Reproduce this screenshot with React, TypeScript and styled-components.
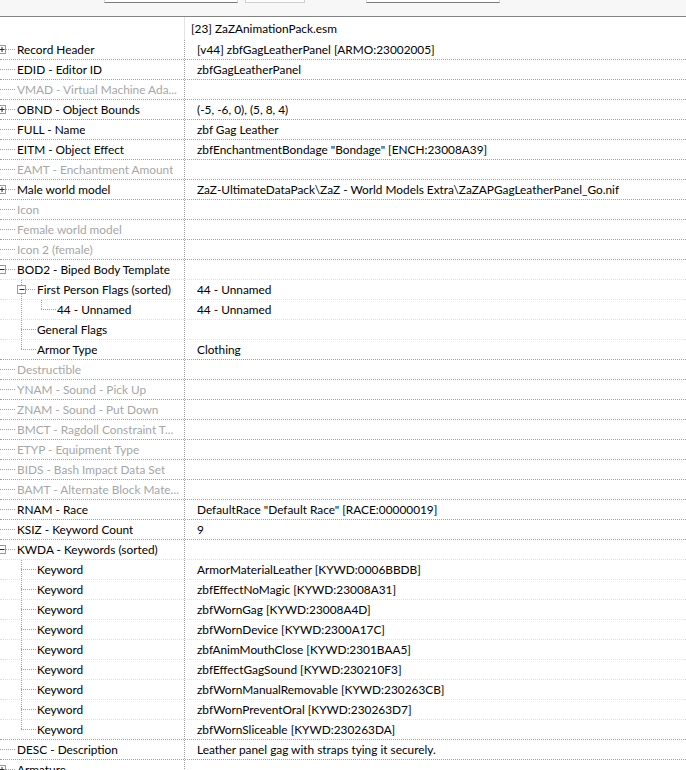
import React from 'react';
import styled, { createGlobalStyle } from 'styled-components';

type Node = {
  label: string;
  value?: string;
  depth?: number;
  expand?: 'open' | 'closed';
  muted?: boolean;
};

const records: Node[] = [
  { label: 'Record Header', value: '[v44] zbfGagLeatherPanel [ARMO:23002005]', expand: 'closed' },
  { label: 'EDID - Editor ID', value: 'zbfGagLeatherPanel' },
  { label: 'VMAD - Virtual Machine Ada...', muted: true },
  { label: 'OBND - Object Bounds', value: '(-5, -6, 0), (5, 8, 4)', expand: 'closed' },
  { label: 'FULL - Name', value: 'zbf Gag Leather' },
  { label: 'EITM - Object Effect', value: 'zbfEnchantmentBondage "Bondage" [ENCH:23008A39]' },
  { label: 'EAMT - Enchantment Amount', muted: true },
  {
    label: 'Male world model',
    value: 'ZaZ-UltimateDataPack\\ZaZ - World Models Extra\\ZaZAPGagLeatherPanel_Go.nif',
    expand: 'closed',
  },
  { label: 'Icon', muted: true },
  { label: 'Female world model', muted: true },
  { label: 'Icon 2 (female)', muted: true },
  { label: 'BOD2 - Biped Body Template', expand: 'open' },
  { label: 'First Person Flags (sorted)', value: '44 - Unnamed', depth: 1, expand: 'open' },
  { label: '44 - Unnamed', value: '44 - Unnamed', depth: 2 },
  { label: 'General Flags', depth: 1 },
  { label: 'Armor Type', value: 'Clothing', depth: 1 },
  { label: 'Destructible', muted: true },
  { label: 'YNAM - Sound - Pick Up', muted: true },
  { label: 'ZNAM - Sound - Put Down', muted: true },
  { label: 'BMCT - Ragdoll Constraint T...', muted: true },
  { label: 'ETYP - Equipment Type', muted: true },
  { label: 'BIDS - Bash Impact Data Set', muted: true },
  { label: 'BAMT - Alternate Block Mate...', muted: true },
  { label: 'RNAM - Race', value: 'DefaultRace "Default Race" [RACE:00000019]' },
  { label: 'KSIZ - Keyword Count', value: '9' },
  { label: 'KWDA - Keywords (sorted)', expand: 'open' },
  { label: 'Keyword', value: 'ArmorMaterialLeather [KYWD:0006BBDB]', depth: 1 },
  { label: 'Keyword', value: 'zbfEffectNoMagic [KYWD:23008A31]', depth: 1 },
  { label: 'Keyword', value: 'zbfWornGag [KYWD:23008A4D]', depth: 1 },
  { label: 'Keyword', value: 'zbfWornDevice [KYWD:2300A17C]', depth: 1 },
  { label: 'Keyword', value: 'zbfAnimMouthClose [KYWD:2301BAA5]', depth: 1 },
  { label: 'Keyword', value: 'zbfEffectGagSound [KYWD:230210F3]', depth: 1 },
  { label: 'Keyword', value: 'zbfWornManualRemovable [KYWD:230263CB]', depth: 1 },
  { label: 'Keyword', value: 'zbfWornPreventOral [KYWD:230263D7]', depth: 1 },
  { label: 'Keyword', value: 'zbfWornSliceable [KYWD:230263DA]', depth: 1 },
  { label: 'DESC - Description', value: 'Leather panel gag with straps tying it securely.' },
  { label: 'Armature', expand: 'closed' },
];

const GlobalStyle = createGlobalStyle`
  html, body {
    margin: 0;
    padding: 0;
    background: #ffffff;
  }
  body {
    width: 686px;
    height: 770px;
    overflow: hidden;
    font-family: Lato, "Noto Sans", "DejaVu Sans", sans-serif;
    font-size: 11.85px;
    color: #000000;
  }
`;

const Window = styled.div`
  width: 686px;
  height: 770px;
  overflow: hidden;
  display: flex;
  flex-direction: column;
  background: #ffffff;
`;

const Toolbar = styled.div`
  flex: none;
  height: 16px;
  background: #f7f7f7;
  border-bottom: 1px solid #838383;
  display: flex;
  align-items: flex-start;
  padding-left: 104px;
  overflow: hidden;
`;

const EditBox = styled.div<{ $width: number; $gap: number }>`
  flex: none;
  width: ${(p) => p.$width}px;
  height: 20px;
  margin-top: -17px;
  margin-right: ${(p) => p.$gap}px;
  box-sizing: border-box;
  background: #ffffff;
  border: 1px solid #dadada;
  border-bottom-color: #7a7a7a;
`;

const ToolButton = styled.div<{ $width: number; $gap: number }>`
  flex: none;
  width: ${(p) => p.$width}px;
  height: 20px;
  margin-top: -17px;
  margin-right: ${(p) => p.$gap}px;
  box-sizing: border-box;
  background: #fdfdfd;
  border: 1px solid #d0d0d0;
`;

const Tree = styled.div`
  flex: 1;
  display: flex;
  flex-direction: column;
  overflow: hidden;
`;

const HeaderRow = styled.div`
  flex: none;
  display: grid;
  grid-template-columns: 185px 1fr;
  height: 23px;
`;

const HeaderName = styled.div`
  border-right: 1px solid #e3e3e3;
`;

const HeaderValue = styled.div`
  padding-left: 6px;
  line-height: 23px;
  white-space: nowrap;
`;

const Row = styled.div<{ $soft: boolean }>`
  flex: none;
  display: grid;
  grid-template-columns: 185px 1fr;
  height: 20px;
  box-sizing: border-box;
  border-bottom: 1px dotted ${(p) => (p.$soft ? '#e0e0e0' : '#a0a0a0')};
`;

const NameCell = styled.div<{ $muted: boolean }>`
  display: flex;
  align-items: flex-start;
  box-sizing: border-box;
  border-right: 1px dotted #a0a0a0;
  overflow: hidden;
  white-space: nowrap;
  color: ${(p) => (p.$muted ? '#a6a6a6' : '#000000')};
`;

const Guide = styled.svg`
  flex: none;
  display: block;
`;

const Label = styled.span`
  line-height: 19px;
  overflow: hidden;
`;

const ValueCell = styled.div`
  padding-left: 12px;
  line-height: 19px;
  white-space: nowrap;
  overflow: hidden;
`;

const LINE = '#a0a0a0';

// does a sibling at `level` follow row i before the branch closes?
const continues = (i: number, level: number) => {
  for (let j = i + 1; j < records.length; j++) {
    const d = records[j].depth ?? 0;
    if (d < level) return false;
    if (d === level) return true;
  }
  return false;
};

function TreeGuide({ index }: { index: number }) {
  const node = records[index];
  const depth = node.depth ?? 0;
  const width = 17 + 20 * depth;
  const cx = 1 + 20 * depth;
  const parts: React.ReactNode[] = [];

  for (let k = 1; k <= depth; k++) {
    const x = 1 + 20 * k + 0.5;
    const more = continues(index, k);
    if (k < depth) {
      if (more) parts.push(<line key={`v${k}`} x1={x} y1={0} x2={x} y2={19} />);
    } else {
      const end = more ? 19 : 10;
      if (node.expand) {
        parts.push(<line key="va" x1={x} y1={0} x2={x} y2={5} />);
        if (more) parts.push(<line key="vb" x1={x} y1={14} x2={x} y2={19} />);
      } else {
        parts.push(<line key="v" x1={x} y1={0} x2={x} y2={end} />);
      }
    }
  }

  const hStart = node.expand ? cx + 5 : depth === 0 ? 0 : cx;
  parts.push(<line key="h" x1={hStart} y1={9.5} x2={16 + 20 * depth} y2={9.5} />);

  return (
    <Guide width={width} height={19} viewBox={`0 0 ${width} 19`}>
      <g stroke={LINE} strokeWidth={1} strokeDasharray="1 1" fill="none">
        {parts}
      </g>
      {node.expand && (
        <g>
          <rect x={cx - 3.5} y={5.5} width={8} height={8} fill="#ffffff" stroke="#9a9a9a" />
          <line x1={cx - 1.5} y1={9.5} x2={cx + 3.5} y2={9.5} stroke="#2b2b2b" />
          {node.expand === 'closed' && (
            <line x1={cx + 1} y1={7} x2={cx + 1} y2={12} stroke="#2b2b2b" />
          )}
        </g>
      )}
    </Guide>
  );
}

export default function App() {
  return (
    <>
      <GlobalStyle />
      <Window>
        <Toolbar>
          <EditBox $width={134} $gap={7} />
          <ToolButton $width={60} $gap={61} />
          <EditBox $width={134} $gap={0} />
        </Toolbar>
        <Tree>
          <HeaderRow>
            <HeaderName />
            <HeaderValue>[23] ZaZAnimationPack.esm</HeaderValue>
          </HeaderRow>
          {records.map((node, i) => {
            const next = records[i + 1];
            const soft = !!next && (next.depth ?? 0) > 0;
            return (
              <Row key={i} $soft={soft}>
                <NameCell $muted={!!node.muted}>
                  <TreeGuide index={i} />
                  <Label>{node.label}</Label>
                </NameCell>
                <ValueCell>{node.value ?? ''}</ValueCell>
              </Row>
            );
          })}
        </Tree>
      </Window>
    </>
  );
}
